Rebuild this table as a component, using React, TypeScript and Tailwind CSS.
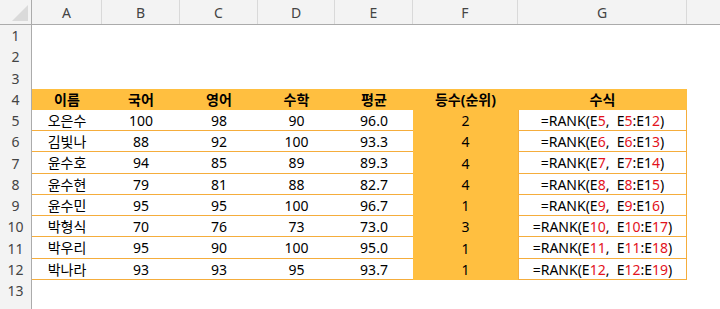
import React from 'react';

const colWidths = ['w-[70px]', 'w-[78px]', 'w-[78px]', 'w-[77px]', 'w-[78px]', 'w-[105px]', 'w-[169px]'];
const letters = ['A', 'B', 'C', 'D', 'E', 'F', 'G'];
const rowHeights = [
  'h-[21px]', 'h-[21px]', 'h-[22px]', 'h-[21px]', 'h-[21px]', 'h-[21px]', 'h-[22px]',
  'h-[21px]', 'h-[21px]', 'h-[21px]', 'h-[22px]', 'h-[21px]', 'h-[21px]', 'h-[21px]',
];

// 수식 조각: [텍스트, 빨강여부]
type Part = [string, boolean];

const students: { name: string; scores: string[]; rank: string; formula: Part[] }[] = [
  { name: '오은수', scores: ['100', '98', '90', '96.0'], rank: '2', formula: [['=RANK(E', false], ['5', true], [',  E', false], ['5', true], [':E1', false], ['2', true], [')', false]] },
  { name: '김빛나', scores: ['88', '92', '100', '93.3'], rank: '4', formula: [['=RANK(E', false], ['6', true], [',  E', false], ['6', true], [':E1', false], ['3', true], [')', false]] },
  { name: '윤수호', scores: ['94', '85', '89', '89.3'], rank: '4', formula: [['=RANK(E', false], ['7', true], [',  E', false], ['7', true], [':E1', false], ['4', true], [')', false]] },
  { name: '윤수현', scores: ['79', '81', '88', '82.7'], rank: '4', formula: [['=RANK(E', false], ['8', true], [',  E', false], ['8', true], [':E1', false], ['5', true], [')', false]] },
  { name: '윤수민', scores: ['95', '95', '100', '96.7'], rank: '1', formula: [['=RANK(E', false], ['9', true], [',  E', false], ['9', true], [':E1', false], ['6', true], [')', false]] },
  { name: '박형식', scores: ['70', '76', '73', '73.0'], rank: '3', formula: [['=RANK(E', false], ['10', true], [',  E', false], ['10', true], [':E', false], ['17', true], [')', false]] },
  { name: '박우리', scores: ['95', '90', '100', '95.0'], rank: '1', formula: [['=RANK(E', false], ['11', true], [',  E', false], ['11', true], [':E', false], ['18', true], [')', false]] },
  { name: '박나라', scores: ['93', '93', '95', '93.7'], rank: '1', formula: [['=RANK(E', false], ['12', true], [',  E', false], ['12', true], [':E', false], ['19', true], [')', false]] },
];

const headers = ['이름', '국어', '영어', '수학', '평균', '등수(순위)', '수식'];

function RowLabel({ n }: { n?: number }) {
  return (
    <div className="w-[32px] shrink-0 flex items-center justify-center bg-[#f3f3f3] border-r border-[#ababab] text-[14px] text-[#444]">
      {n}
    </div>
  );
}

export default function App() {
  return (
    <div
      className="w-[720px] h-[309px] overflow-hidden bg-white text-[14px] text-black"
      style={{ fontFamily: '"Noto Sans", "Noto Sans CJK KR", sans-serif' }}
    >
      {/* 열 머리글 */}
      <div className="flex h-[25px] bg-[#f3f3f3] border-b border-[#ababab]">
        <div className="relative w-[32px] shrink-0 border-r border-[#ababab]">
          <div className="absolute right-[3px] bottom-[3px] w-0 h-0 border-l-[16px] border-l-transparent border-b-[16px] border-b-[#dadada]" />
        </div>
        {letters.map((l, i) => (
          <div
            key={l}
            className={`${colWidths[i]} shrink-0 flex items-center justify-center border-r border-[#d9d9d9] text-[14px] text-[#444]`}
          >
            {l}
          </div>
        ))}
        <div className="flex-1" />
      </div>

      {rowHeights.map((h, idx) => {
        const n = idx + 1;
        if (n === 4) {
          return (
            <div key={n} className={`flex ${h}`}>
              <RowLabel n={n} />
              {headers.map((t, i) => (
                <div
                  key={t}
                  className={`${colWidths[i]} shrink-0 flex items-center justify-center bg-[#ffbf40] font-bold`}
                >
                  {t}
                </div>
              ))}
              <div className="flex-1" />
            </div>
          );
        }
        if (n >= 5 && n <= 12) {
          const s = students[n - 5];
          const cells = [s.name, ...s.scores];
          return (
            <div key={n} className={`flex ${h}`}>
              <RowLabel n={n} />
              {cells.map((c, i) => (
                <div
                  key={i}
                  className={`${colWidths[i]} shrink-0 flex items-center justify-center bg-white border-b border-[#f5ad3c]`}
                >
                  {c}
                </div>
              ))}
              <div className="w-[105px] shrink-0 flex items-center justify-center bg-[#ffbf40]">
                {s.rank}
              </div>
              <div className="w-[169px] shrink-0 flex items-center justify-center bg-white border-l border-r border-b border-[#f5ad3c] whitespace-pre">
                {s.formula.map(([t, red], k) => (
                  <span key={k} className={red ? 'text-[#e3121c]' : ''}>
                    {t}
                  </span>
                ))}
              </div>
              <div className="flex-1" />
            </div>
          );
        }
        return (
          <div key={n} className={`flex ${h}`}>
            <RowLabel n={n <= 13 ? n : undefined} />
            <div className="flex-1" />
          </div>
        );
      })}
    </div>
  );
}
